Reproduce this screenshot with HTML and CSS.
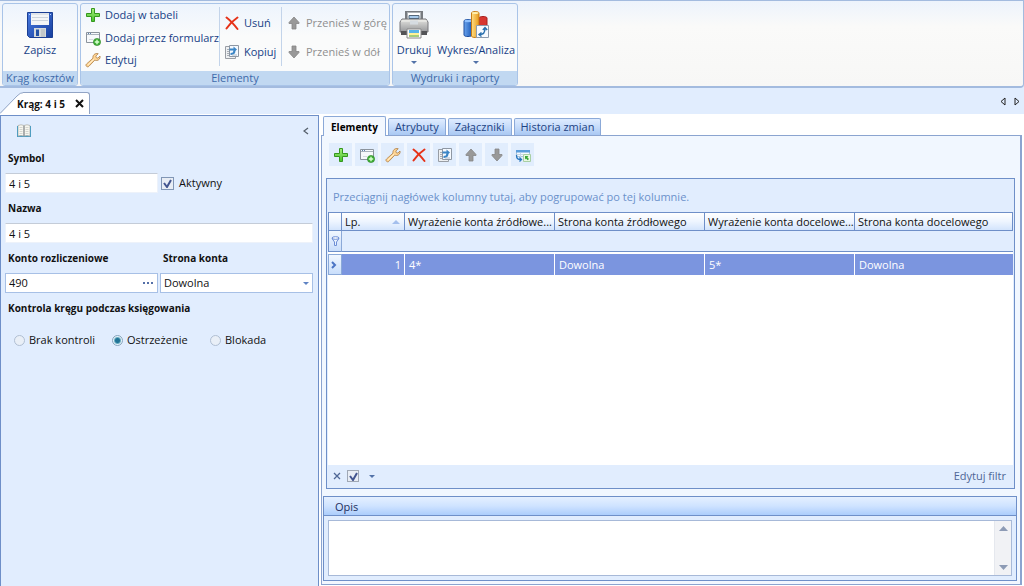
FILE: index.html
```html
<!DOCTYPE html>
<html lang="pl">
<head>
<meta charset="utf-8">
<title>Krąg: 4 i 5</title>
<link rel="stylesheet" href="styles.css">
</head>
<body>
<svg class="defs" aria-hidden="true">
  <defs>
    <linearGradient id="gGreen" x1="0" y1="0" x2="0" y2="1"><stop offset="0" stop-color="#a6ee7c"/><stop offset="1" stop-color="#45c22a"/></linearGradient>
    <linearGradient id="gBlue" x1="0" y1="0" x2="1" y2="1"><stop offset="0" stop-color="#4a7be0"/><stop offset="1" stop-color="#163f9e"/></linearGradient>
    <linearGradient id="gBar" x1="0" y1="0" x2="1" y2="0"><stop offset="0" stop-color="#6aa4ee"/><stop offset="1" stop-color="#1d5bb8"/></linearGradient>
    <linearGradient id="gGold" x1="0" y1="0" x2="1" y2="0"><stop offset="0" stop-color="#ffdf86"/><stop offset="1" stop-color="#e79a1c"/></linearGradient>
    <linearGradient id="gMetal" x1="0" y1="0" x2="0" y2="1"><stop offset="0" stop-color="#e4e4e0"/><stop offset="1" stop-color="#96979a"/></linearGradient>
    <symbol id="plus" viewBox="0 0 16 16"><path d="M6.500 1.500h3v5h5v3h-5v5h-3v-5h-5v-3h5z" fill="url(#gGreen)" stroke="#35971f"/></symbol>
    <symbol id="form" viewBox="0 0 16 16"><path d="M1.500 2.500h13v10h-13z" fill="#f7f9fb" stroke="#8b939c"/><path d="M2 4.500h12" stroke="#a9b2bb"/><path d="M3 3.500h1M5 3.500h1" stroke="#5d83b0"/><path d="M4 9.500h4" stroke="#d4d9de"/><circle cx="12" cy="12" r="3.600" fill="#3fae35" stroke="#2b8425" stroke-width=".6"/><path d="M12 9.800v4.400M9.800 12h4.400" stroke="#d8ffd0" stroke-width="1.400"/></symbol>
    <symbol id="wrench" viewBox="0 0 16 16"><path d="M13.200 1.700 10.800 4.100l.5 1.700 1.600.3L15 4c.5 2.200-1 4.500-3.500 4.500-.7 0-1.200-.1-1.700-.4L4 14.200c-.7.8-1.800.8-2.500.1s-.7-1.600 0-2.300L8 6.200C7.400 3.500 9.700.8 13.200 1.700z" fill="#ffd696" stroke="#ad7c42" stroke-width=".8"/><path d="M3 12.800 9 7.200" stroke="#fff0cf"/></symbol>
    <symbol id="delete" viewBox="0 0 16 16"><path d="M2.500 2.500C6.500 5.500 10 9.500 13.500 14M13.500 2.500C9 5.500 5.500 9 2.500 13.500" fill="none" stroke="#e63218" stroke-width="2" stroke-linecap="round"/></symbol>
    <symbol id="copy" viewBox="0 0 16 16"><path d="M1.500 2.500h10v12h-10z" fill="#eef0f2" stroke="#989da4"/><path d="M3 5.500h2M3 7.500h2M3 9.500h2M3 11.500h2" stroke="#a8aeb5"/><path d="M5.500 1.500h9v11h-9z" fill="#f5f9fe" stroke="#8e97a3"/><path d="M6.500 10c3 0 4-1 4-3.500" fill="none" stroke="#3c86c6" stroke-width="2"/><path d="M5.500 4.500h4v-2L13 5.500 9.500 8.500v-2h-4z" fill="#3c86c6"/><path d="M8 11h5" stroke="#aebbc8"/></symbol>
    <symbol id="up" viewBox="0 0 16 16"><path d="M8 2 3 7.500v1h3V14h4V8.500h3v-1z" fill="#999" stroke="#858585" stroke-width=".8"/></symbol>
    <symbol id="down" viewBox="0 0 16 16"><path d="M8 14 3 8.500v-1h3V2h4v5.500h3v1z" fill="#999" stroke="#858585" stroke-width=".8"/></symbol>
    <symbol id="views" viewBox="0 0 16 16"><path d="M1.500 3.500h13v6h-13z" fill="#f5faff" stroke="#a9c3d8"/><path d="M1 3h14v2.500H1z" fill="#5a9ddb"/><path d="M2 7.500h6M5.500 6v4" stroke="#c3d6e6"/><path d="M1.500 8c0 4 1.500 4.500 4.500 4.500M4.500 10.500l2 2-2 2" fill="none" stroke="#2675be" stroke-width="1.300"/><path d="M8.500 7.500h7v7h-7z" fill="#e9f8e4" stroke="#a9cfa4"/><path d="M10 9h3.500l-1.200 1.200 1.700 1.800-1.300 1.200-1.700-1.700L10 12.500z" fill="#39a637"/></symbol>
    <symbol id="filter" viewBox="0 0 9 11"><path d="M1 2.500 3.500 6v3.500h2V6L8 2.500z" fill="#e9f2fd" stroke="#6d8ed6"/><ellipse cx="4.500" cy="2" rx="3.500" ry="1.300" fill="#fff" stroke="#6d8ed6"/></symbol>
  </defs>
</svg>

<div class="app">
  <header class="ribbon">
    <section class="group">
      <div class="group-body">
        <button class="big save">
          <svg width="32" height="32" viewBox="0 0 32 32"><path d="M3.500 3.500h25v25h-23l-2-2z" fill="url(#gBlue)" stroke="#1b3f93"/><path d="M7 4h18v12H7z" fill="#f4f6f7"/><path d="M7 5h18M8 8.500h16M8 11.500h16" stroke="#ccd4dc"/><path d="M10 19h12v9H10z" fill="#d5dadb"/><path d="M12 20.500h3V27h-3z" fill="#2553a5"/><path d="M18 20v8M20 20v8" stroke="#aeb5b9"/><path d="M5 5.500h1M26 5.500h1" stroke="#b9d2ff"/></svg>
          <span>Zapisz</span>
        </button>
      </div>
      <h2>Krąg kosztów</h2>
    </section>
    <section class="group">
      <div class="group-body">
        <div class="stack three">
          <button class="small"><svg><use href="#plus"/></svg>Dodaj w tabeli</button>
          <button class="small"><svg><use href="#form"/></svg>Dodaj przez formularz</button>
          <button class="small"><svg><use href="#wrench"/></svg>Edytuj</button>
        </div>
        <div class="stack two">
          <button class="small"><svg><use href="#delete"/></svg>Usuń</button>
          <button class="small"><svg><use href="#copy"/></svg>Kopiuj</button>
        </div>
        <div class="stack two">
          <button class="small" disabled><svg><use href="#up"/></svg>Przenieś w górę</button>
          <button class="small" disabled><svg><use href="#down"/></svg>Przenieś w dół</button>
        </div>
      </div>
      <h2>Elementy</h2>
    </section>
    <section class="group">
      <div class="group-body">
        <button class="big print">
          <svg width="32" height="32" viewBox="0 0 32 32"><path d="M7 2h18v10H7z" fill="#777b80"/><path d="M9.500 3.500h13V11h-13z" fill="#fff" stroke="#aeb3b7"/><path d="M4 10h24l2 3v10H2V13z" fill="url(#gMetal)" stroke="#77777a"/><path d="M3 12h26" stroke="#f2f2ee"/><path d="M11 6.500h10v3H11z" fill="#a8cbec" stroke="#55687b"/><path d="M12 11.500h8v4h-8z" fill="#d6dce1"/><path d="M3 22h26v4H3z" fill="#535457"/><path d="M9 20h14v9H9z" fill="#fff" stroke="#888"/><path d="M11 21h10v3H11z" fill="#59b4e9"/><path d="M11 24h10v2H11z" fill="#fff295"/><path d="M11 26h10v2H11z" fill="#a5ce7a"/></svg>
          <span>Drukuj</span><i class="caret"></i>
        </button>
        <button class="big chart">
          <svg width="32" height="32" viewBox="0 0 32 32"><path d="M4 12c0-2 8-2 8 0v14c0 2-8 2-8 0z" fill="url(#gBar)" stroke="#1c4d9d"/><ellipse cx="8" cy="12" rx="3.500" ry="1.200" fill="#8fc1ff"/><path d="M19 9c0-2 8-2 8 0v18h-8z" fill="#d73631" stroke="#a5201e"/><path d="M11.500 4c0-2 7.500-2 7.500 0v23c0 2-7.500 2-7.500 0z" fill="url(#gGold)" stroke="#c77d17"/><ellipse cx="15.200" cy="4" rx="3.300" ry="1.100" fill="#fff0af"/><path d="M16.500 16.500h12v12h-12z" fill="#f7faff" stroke="#8d9bae"/><path d="M20 25.500c3.500 0 5-1.500 5-6M22.800 21l2.200-2.500 2.200 2.500M21.500 23.500l-2.500 2 2.500 2" fill="none" stroke="#286fae" stroke-width="1.400"/></svg>
          <span>Wykres/Analiza</span><i class="caret"></i>
        </button>
      </div>
      <h2>Wydruki i raporty</h2>
    </section>
  </header>

  <nav class="doc-tabs">
    <div class="doc-tab">
      <svg class="tab-slope" viewBox="0 0 24 22" aria-hidden="true"><path d="M0 22 17 4Q20 .5 24 .5V22z" fill="#fff"/><path d="M0 21.500 17 4Q20 .5 24 .5" fill="none" stroke="#91a4c5"/></svg>
      <div class="tab-label"><span>Krąg: 4 i 5</span>
        <button class="icon-button" aria-label="Zamknij"><svg width="9" height="9" viewBox="0 0 9 9"><path d="M1 1l7 7M8 1 1 8" stroke="#111" stroke-width="2"/></svg></button></div>
    </div>
    <div class="doc-arrows">
      <button class="icon-button" aria-label="Poprzednia"><svg width="6" height="9" viewBox="0 0 6 9"><path d="M5 1v7L1 4.500z" fill="none" stroke="#222"/></svg></button>
      <button class="icon-button" aria-label="Następna"><svg width="6" height="9" viewBox="0 0 6 9"><path d="M1 1v7l4-3.500z" fill="none" stroke="#222"/></svg></button>
    </div>
  </nav>

  <main class="workspace">
    <form class="side">
      <div class="side-top">
        <svg width="16" height="16" viewBox="0 0 16 16"><path d="M1 3h14v11H1z" fill="#4f9dc0"/><path d="M2 2.500Q5 1 8 2.500v10.500Q5 12 2 13zM8 2.500Q11 1 14 2.500V13Q11 12 8 13z" fill="#f7f7f0" stroke="#a6a8a4" stroke-width=".7"/><path d="M3.500 4.500h3M3.500 6.500h3M3.500 8.500h3M3.500 10.500h3M9.500 4.500h3M9.500 6.500h3M9.500 8.500h3M9.500 10.500h3" stroke="#d4d5cf"/><path d="M8 3v10" stroke="#8e9398"/><path d="M1.500 3v10.500M14.500 3v10.500" stroke="#4f9dc0"/></svg>
        <button type="button" class="icon-button" aria-label="Zwiń"><svg width="6" height="8" viewBox="0 0 6 8"><path d="M5 1 1 4l4 3" fill="none" stroke="#555f6b" stroke-width="1.300"/></svg></button>
      </div>
      <div class="fields">
        <label class="caption wide" for="symbol">Symbol</label>
        <input class="field flat" id="symbol" value="4 i 5">
        <label class="check"><input type="checkbox" checked>Aktywny</label>
        <label class="caption wide" for="nazwa">Nazwa</label>
        <input class="field flat wide" id="nazwa" value="4 i 5">
        <label class="caption" for="konto">Konto rozliczeniowe</label>
        <label class="caption" for="strona">Strona konta</label>
        <div class="field picker"><input id="konto" value="490"><button type="button" class="icon-button" aria-label="Wybierz konto"><svg width="11" height="2" viewBox="0 0 11 2"><path d="M0 1h2M4 1h2M8 1h2" stroke="#5570a8" stroke-width="2"/></svg></button></div>
        <select class="field" id="strona"><option>Dowolna</option></select>
      </div>
      <fieldset>
        <legend class="caption">Kontrola kręgu podczas księgowania</legend>
        <div class="radios">
          <label><input type="radio" name="kontrola">Brak kontroli</label>
          <label><input type="radio" name="kontrola" checked>Ostrzeżenie</label>
          <label><input type="radio" name="kontrola">Blokada</label>
        </div>
      </fieldset>
    </form>

    <section class="content">
      <div class="tabs" role="tablist">
        <button role="tab" class="tab active" aria-selected="true">Elementy</button>
        <button role="tab" class="tab">Atrybuty</button>
        <button role="tab" class="tab">Załączniki</button>
        <button role="tab" class="tab">Historia zmian</button>
      </div>
      <div class="page">
        <div class="toolbar">
          <button aria-label="Dodaj w tabeli"><svg><use href="#plus"/></svg></button>
          <button aria-label="Dodaj przez formularz"><svg><use href="#form"/></svg></button>
          <button aria-label="Edytuj"><svg><use href="#wrench"/></svg></button>
          <button aria-label="Usuń"><svg><use href="#delete"/></svg></button>
          <button aria-label="Kopiuj"><svg><use href="#copy"/></svg></button>
          <button aria-label="Przenieś w górę"><svg><use href="#up"/></svg></button>
          <button aria-label="Przenieś w dół"><svg><use href="#down"/></svg></button>
          <button aria-label="Widoki"><svg><use href="#views"/></svg></button>
        </div>
        <div class="grid">
          <p class="group-hint">Przeciągnij nagłówek kolumny tutaj, aby pogrupować po tej kolumnie.</p>
          <div class="table-area">
            <table>
              <colgroup><col class="c-mark"><col class="c-no"><col class="c-data"><col class="c-data"><col class="c-data"><col></colgroup>
              <thead>
                <tr><th></th><th><div class="sort">Lp.<i></i></div></th><th>Wyrażenie konta źródłowe...</th><th>Strona konta źródłowego</th><th>Wyrażenie konta docelowe...</th><th>Strona konta docelowego</th></tr>
                <tr class="filter-row"><td class="mark"><svg width="9" height="11"><use href="#filter"/></svg></td><td colspan="5"></td></tr>
              </thead>
              <tbody>
                <tr class="spacer"><td colspan="6"></td></tr>
                <tr class="selected"><td class="mark"><svg width="6" height="8" viewBox="0 0 6 8"><path d="M1 1l3 3-3 3" fill="none" stroke="#4b74c4" stroke-width="2"/></svg></td><td class="num">1</td><td>4*</td><td>Dowolna</td><td>5*</td><td>Dowolna</td></tr>
              </tbody>
            </table>
          </div>
          <div class="grid-footer">
            <button class="icon-button" aria-label="Wyczyść filtr"><svg width="8" height="8" viewBox="0 0 8 8"><path d="M1 1l6 6M7 1 1 7" stroke="#4f6796" stroke-width="1.300"/></svg></button>
            <input type="checkbox" class="gray" checked aria-label="Filtr aktywny">
            <button class="icon-button" aria-label="Lista filtrów"><i class="caret"></i></button>
            <a href="#">Edytuj filtr</a>
          </div>
        </div>
        <section class="notes">
          <h3><label for="opis">Opis</label></h3>
          <div class="notes-box">
            <textarea id="opis"></textarea>
            <div class="scroll">
              <button class="icon-button" aria-label="W górę"><svg width="9" height="5" viewBox="0 0 9 5"><path d="M0 5 4.500 0 9 5z" fill="#8d9bb5"/></svg></button>
              <button class="icon-button" aria-label="W dół"><svg width="9" height="5" viewBox="0 0 9 5"><path d="M0 0l4.500 5L9 0z" fill="#8d9bb5"/></svg></button>
            </div>
          </div>
        </section>
      </div>
    </section>
  </main>
</div>
</body>
</html>
```
FILE: styles.css
```css
* { box-sizing: border-box; }
html, body { height: 100%; }
body {
  margin: 0;
  overflow: hidden;
  background: #e1edfe;
  color: #111;
  font: 11px/14px "Open Sans", "Noto Sans", sans-serif;
}
button, input, select, textarea { font: inherit; color: inherit; }
button { border: 0; padding: 0; background: none; }
h2, h3, p { margin: 0; font-size: inherit; font-weight: normal; }
svg { display: block; flex: none; }
.defs { position: absolute; width: 0; height: 0; }
.app { display: flex; flex-direction: column; height: 100%; }
.icon-button { display: flex; align-items: center; justify-content: center; }

.ribbon {
  display: flex;
  gap: 2px;
  padding: 2px 2px 0;
  border: 1px solid #a3bbdf;
  border-width: 1px 1px 2px 0;
  border-radius: 0 0 4px 0;
  background: linear-gradient(#edf3fc, #fafaf9 30%, #f7f7f6);
}
.group {
  display: flex;
  flex-direction: column;
  height: 83px;
  border: 1px solid #a9c4e8;
  border-radius: 3px;
  overflow: hidden;
  background: linear-gradient(#edf4fd, #fafbfb 40%);
}
.group-body { display: flex; flex: 1; color: #173f86; }
.group h2 { height: 14px; background: #c1d8f1; color: #3e6aaa; text-align: center; line-height: 14px; }
.big { display: flex; flex-direction: column; align-items: center; padding-top: 5px; white-space: nowrap; }
.big span { line-height: 14px; margin-top: 2px; }
.save { width: 74px; }
.print { width: 42px; }
.chart { width: 82px; }
.caret { width: 0; height: 0; border: 3px solid transparent; border-top-color: #5272a8; border-bottom: 0; }
.big .caret { margin-top: 4px; }
.stack { display: flex; flex-direction: column; padding-left: 4px; margin: 3px 0 5px; }
.stack + .stack { border-left: 1px solid #c3d4ea; }
.two { width: 62px; padding-top: 7px; gap: 11px; }
.two:last-child { width: 108px; }
.three { width: 138px; margin: 2px 0; justify-content: space-between; }
.small { display: flex; align-items: center; gap: 4px; height: 18px; white-space: nowrap; }
.small svg, .toolbar svg { width: 16px; height: 16px; }
.small:disabled { color: #8f8f8f; }

.doc-tabs { display: flex; justify-content: space-between; align-items: flex-end; height: 27px; border-bottom: 1px solid #fff; }
.doc-tab { display: flex; height: 22px; }
.tab-slope { width: 24px; height: 22px; margin-right: -8px; }
.tab-label { display: flex; align-items: center; gap: 10px; padding: 0 5px 0 2px; border: 1px solid #91a4c5; border-width: 1px 1px 0 0; border-radius: 0 3px 0 0; background: #fff; font-weight: bold; font-size: 10px; margin-left: 7px; }
.tab-label span { margin-left: -8px; z-index: 1; }
.doc-arrows { display: flex; gap: 8px; padding: 0 4px 8px; }

.workspace { display: flex; flex: 1; min-height: 0; background: #fff; gap: 2px; }
.side { flex: 0 0 319px; min-width: 0; padding: 0 5px 0 4px; border: 1px solid #6e8fc8; border-bottom: 0; background: #e1edfe; }
.side-top { display: flex; justify-content: space-between; align-items: center; height: 30px; padding: 0 4px 0 11px; }
.fields { display: grid; grid-template-columns: minmax(0, 1fr) minmax(0, 1fr); column-gap: 2px; }
.caption { height: 26px; padding: 0 3px; font-size: 10px; line-height: 24px; font-weight: bold; }
.wide { grid-column: 1 / -1; }
.field { width: 100%; height: 20px; margin: 1px 0 3px; padding: 0 3px; border: 1px solid #a7c0e6; border-radius: 0; background: #fff; outline: 0; }
.flat { border-color: #c4ccd8 #edf2fa #edf2fa; }
.picker { display: flex; align-items: center; }
.picker input { flex: 1; min-width: 0; padding: 0; border: 0; outline: 0; background: none; }
select.field {
  appearance: none;
  background: #fff url("data:image/svg+xml,%3Csvg xmlns='http://www.w3.org/2000/svg' width='6' height='3'%3E%3Cpath d='M0 0h6L3 3z' fill='%235f83c3'/%3E%3C/svg%3E") no-repeat right 3px center;
}
.check { display: flex; align-items: center; gap: 5px; margin-bottom: 2px; padding-left: 1px; }
input[type="checkbox"] {
  appearance: none;
  width: 13px;
  height: 13px;
  margin: 0;
  border: 1px solid #8196b5;
  background: #e8edf5 url("data:image/svg+xml,%3Csvg xmlns='http://www.w3.org/2000/svg' width='9' height='9'%3E%3Cpath d='M1 4l3 4 4-7' fill='none' stroke='%2343558f' stroke-width='2'/%3E%3C/svg%3E") no-repeat center;
}
input.gray { width: 12px; height: 12px; border-color: #a0a8b5; }
fieldset { min-width: 0; margin: 0; padding: 0; border: 0; }
legend { display: block; }
.radios { display: flex; padding: 11px 0 11px 9px; }
.radios label { display: flex; align-items: center; gap: 4px; width: 98px; }
input[type="radio"] { appearance: none; width: 11px; height: 11px; margin: 0; border: 1px solid #b0bfd3; border-radius: 50%; background: #e9eff7; }
input[type="radio"]:checked { border-color: #87a4bd; background: radial-gradient(circle, #217496 0 2px, #6badc2 3px, #e5f3fa 4px); }

.content { display: flex; flex: 1; flex-direction: column; min-width: 0; padding: 1px 2px 1px 0; }
.tabs { display: flex; align-items: flex-end; gap: 2px; height: 19px; padding-left: 2px; }
.tab { height: 17px; padding: 0 6px; border: 1px solid #8ba9d8; border-bottom: 0; border-radius: 2px 2px 0 0; background: linear-gradient(#dfecff, #c5dbfa 50%, #a9c8f3); color: #1e4383; line-height: 16px; }
.tab.active { z-index: 1; height: 20px; margin-bottom: -1px; padding: 0 7px; background: #f3f8ff; color: #000; font-size: 10px; font-weight: bold; line-height: 18px; }
.page { display: flex; flex: 1; flex-direction: column; min-height: 0; padding: 7px 3px 3px 1px; border: 1px solid #8ba4d0; border-right-width: 2px; background: #f1f7ff; }
.toolbar { display: flex; gap: 3px; padding: 0 6px; }
.toolbar button { display: flex; align-items: center; justify-content: center; width: 23px; height: 23px; background: #e1edfd; }
.grid { display: flex; flex: 1; flex-direction: column; min-height: 0; margin: 12px 2px 7px 3px; padding: 1px; border: 1px solid #6e8fc8; background: #e1edfe; }
.group-hint { height: 32px; padding: 0 5px; color: #6b91cb; line-height: 34px; }
.table-area { flex: 1; background: #fff; }
table { width: 100%; table-layout: fixed; border-collapse: separate; border-spacing: 0; }
.c-mark { width: 14px; }
.c-no { width: 63px; }
.c-data { width: 150px; }
th, td { height: 20px; padding: 0 4px; overflow: hidden; text-align: left; white-space: nowrap; font-weight: normal; }
th { height: 19px; padding: 0 0 0 3px; border: 1px solid #6e8fc8; border-left: 0; background: linear-gradient(#fff, #eef5ff 50%, #d3e4fc); }
th:first-child, .mark { border-left: 1px solid #6e8fc8; }
.sort { display: flex; align-items: center; justify-content: space-between; padding-right: 4px; }
.sort i { border: 4px solid transparent; border-top: 0; border-bottom-color: #a4bfed; }
.filter-row td { height: 21px; background: #e1edfe; border-bottom: 1px solid #6e8fc8; }
td.mark { padding: 0 2px; border-right: 1px solid #8ba9d8; background: linear-gradient(#f1f7ff, #c9defb); }
.spacer td { height: 2px; padding: 0; line-height: 0; }
.selected td { height: 21px; border-right: 1px solid #fff; background: #7b95df; color: #fff; }
.selected td.mark { border: 1px solid #8ba9d8; background: linear-gradient(#f1f7ff, #c9defb); }
.selected td:last-child { border-right-color: #7b95df; }
.selected td.num { padding-right: 3px; text-align: right; }
.grid-footer { display: flex; align-items: center; gap: 6px; height: 22px; padding: 0 7px 0 5px; }
.grid-footer a { margin-left: auto; color: #4f6796; text-decoration: none; }
.grid-footer input + button { margin-left: 4px; }
.notes { border: 1px solid #6e8fc8; background: #e1edfe; }
.notes h3 { height: 19px; padding: 0 11px; border-bottom: 1px solid #6e8fc8; background: linear-gradient(#e5f0ff, #cfe3ff 50%, #abcdfc); color: #1b2e5c; line-height: 19px; }
.notes-box { display: flex; height: 56px; margin: 4px; border: 1px solid #a7b9d8; background: #fff; }
textarea { flex: 1; border: 0; resize: none; outline: 0; background: none; overflow: hidden; }
.scroll { display: flex; flex-direction: column; justify-content: space-between; align-items: center; width: 17px; padding: 5px 0; border-left: 1px solid #e5e8ee; background: #f1f2f5; }
```
